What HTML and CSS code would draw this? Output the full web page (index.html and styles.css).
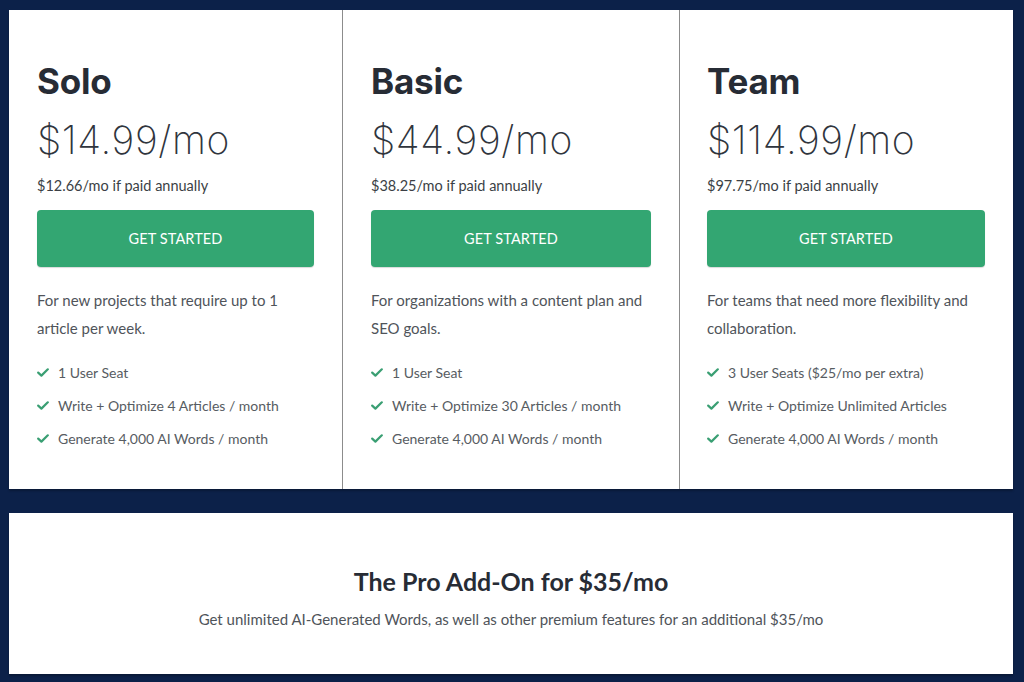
FILE: index.html
```html
<!DOCTYPE html>
<html lang="en">
<head>
<meta charset="utf-8">
<title>Pricing</title>
<link rel="stylesheet" href="styles.css">
</head>
<body>
<main class="page">
  <section class="plans">
    <div class="plan">
      <h2 class="plan-name">Solo</h2>
      <div class="plan-price">$14.99/mo</div>
      <div class="plan-annual">$12.66/mo if paid annually</div>
      <a class="btn" href="#">GET STARTED</a>
      <p class="plan-desc">For new projects that require up to 1 article per week.</p>
      <ul class="features">
        <li><svg class="check" viewBox="0 0 12 9"><polyline points="1.2,4.6 4.4,7.6 10.8,1.3"/></svg>1 User Seat</li>
        <li><svg class="check" viewBox="0 0 12 9"><polyline points="1.2,4.6 4.4,7.6 10.8,1.3"/></svg>Write + Optimize 4 Articles / month</li>
        <li><svg class="check" viewBox="0 0 12 9"><polyline points="1.2,4.6 4.4,7.6 10.8,1.3"/></svg>Generate 4,000 AI Words / month</li>
      </ul>
    </div>
    <div class="plan">
      <h2 class="plan-name">Basic</h2>
      <div class="plan-price">$44.99/mo</div>
      <div class="plan-annual">$38.25/mo if paid annually</div>
      <a class="btn" href="#">GET STARTED</a>
      <p class="plan-desc">For organizations with a content plan and SEO goals.</p>
      <ul class="features">
        <li><svg class="check" viewBox="0 0 12 9"><polyline points="1.2,4.6 4.4,7.6 10.8,1.3"/></svg>1 User Seat</li>
        <li><svg class="check" viewBox="0 0 12 9"><polyline points="1.2,4.6 4.4,7.6 10.8,1.3"/></svg>Write + Optimize 30 Articles / month</li>
        <li><svg class="check" viewBox="0 0 12 9"><polyline points="1.2,4.6 4.4,7.6 10.8,1.3"/></svg>Generate 4,000 AI Words / month</li>
      </ul>
    </div>
    <div class="plan">
      <h2 class="plan-name">Team</h2>
      <div class="plan-price">$114.99/mo</div>
      <div class="plan-annual">$97.75/mo if paid annually</div>
      <a class="btn" href="#">GET STARTED</a>
      <p class="plan-desc">For teams that need more flexibility and collaboration.</p>
      <ul class="features">
        <li><svg class="check" viewBox="0 0 12 9"><polyline points="1.2,4.6 4.4,7.6 10.8,1.3"/></svg>3 User Seats ($25/mo per extra)</li>
        <li><svg class="check" viewBox="0 0 12 9"><polyline points="1.2,4.6 4.4,7.6 10.8,1.3"/></svg>Write + Optimize Unlimited Articles</li>
        <li><svg class="check" viewBox="0 0 12 9"><polyline points="1.2,4.6 4.4,7.6 10.8,1.3"/></svg>Generate 4,000 AI Words / month</li>
      </ul>
    </div>
  </section>
  <section class="addon">
    <h3 class="addon-title">The Pro Add-On for $35/mo</h3>
    <p class="addon-text">Get unlimited AI-Generated Words, as well as other premium features for an additional $35/mo</p>
  </section>
</main>
</body>
</html>
```

FILE: styles.css
```css
html, body {
  margin: 0;
  padding: 0;
}
body {
  background: #0c2149;
  font-family: "Lato", "Liberation Sans", sans-serif;
  color: #555a60;
  width: 1024px;
  height: 682px;
  overflow: hidden;
}
.page {
  padding: 10px 11px 0 9px;
  display: flex;
  flex-direction: column;
  gap: 24px;
}
.plans {
  background: #fff;
  display: grid;
  grid-template-columns: 333px 337px 1fr;
  height: 479px;
  box-shadow: 0 2px 2px rgba(0,0,0,0.25);
}
.plan {
  padding: 49px 28px 0 28px;
  border-left: 1px solid #8c8c8c;
  display: flex;
  flex-direction: column;
}
.plan:first-child {
  border-left: none;
}
.plan:last-child {
  padding-left: 27px;
}
.plan-name {
  margin: 0;
  font-family: "Inter", sans-serif;
  font-weight: 700;
  font-size: 35px;
  line-height: 44px;
  color: #272c35;
  letter-spacing: -0.2px;
}
.plan-price {
  margin-top: 13px;
  font-family: "Inter", sans-serif;
  font-weight: 200;
  font-size: 39px;
  line-height: 48px;
  letter-spacing: 0.6px;
  color: #30353d;
}
.plan-annual {
  margin-top: 12px;
  font-size: 14.5px;
  line-height: 20px;
  color: #3b3f45;
}
.btn {
  margin-top: 14px;
  height: 57px;
  border-radius: 4px;
  background: #33a672;
  color: #fff;
  text-decoration: none;
  display: flex;
  align-items: center;
  justify-content: center;
  font-size: 14.5px;
  letter-spacing: 0.1px;
  box-shadow: 0 1px 1px rgba(0,0,0,0.15);
}
.plan-desc {
  margin: 19px 0 0;
  font-size: 15px;
  line-height: 28px;
  color: #4f545a;
}
.features {
  list-style: none;
  margin: 14px 0 0;
  padding: 0;
}
.features li {
  display: flex;
  align-items: center;
  font-size: 14px;
  line-height: 33px;
  color: #575c62;
}
.check {
  width: 12px;
  height: 9px;
  margin-right: 9px;
  flex: none;
}
.check polyline {
  fill: none;
  stroke: #3a9f73;
  stroke-width: 2.2;
  stroke-linecap: round;
  stroke-linejoin: round;
}
.addon {
  background: #fff;
  height: 161px;
  display: flex;
  flex-direction: column;
  align-items: center;
  justify-content: center;
  padding-top: 8px;
  box-sizing: border-box;
  box-shadow: 0 2px 2px rgba(0,0,0,0.25);
}
.addon-title {
  margin: 0;
  font-weight: 700;
  font-size: 25px;
  line-height: 30px;
  color: #272c35;
}
.addon-text {
  margin: 13px 0 0;
  font-size: 15px;
  line-height: 20px;
  color: #4f545a;
}
```
